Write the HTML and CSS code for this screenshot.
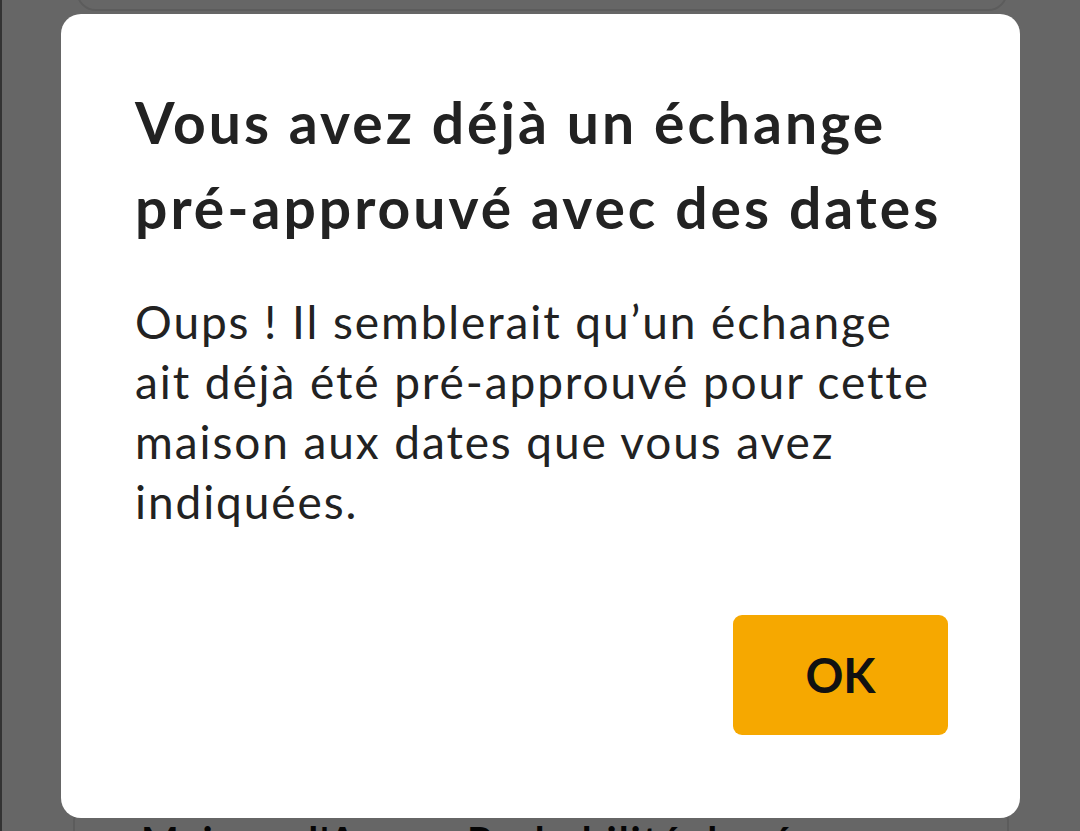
FILE: index.html
```html
<!DOCTYPE html>
<html lang="fr">
<head>
<meta charset="utf-8">
<title>Échange pré-approuvé</title>
<link rel="stylesheet" href="styles.css">
</head>
<body>
<div class="page">
  <div class="card card-top"></div>
  <div class="spacer"></div>
  <div class="card card-bottom">
    <p class="card-title">Maison d'Anne · Probabilité de réponse</p>
  </div>
</div>
<div class="overlay">
  <div class="modal" role="dialog" aria-modal="true">
    <h1 class="modal-title">Vous avez déjà un échange <span class="nw">pré-approuvé</span> avec des dates</h1>
    <p class="modal-text">Oups ! Il semblerait qu’un échange ait déjà été pré&#8209;approuvé pour cette maison aux dates que vous avez indiquées.</p>
    <div class="modal-actions">
      <button class="btn-ok" type="button">OK</button>
    </div>
  </div>
</div>
</body>
</html>
```

FILE: styles.css
```css
* { box-sizing: border-box; }
html, body { margin: 0; padding: 0; }
body {
  width: 1080px;
  height: 831px;
  overflow: hidden;
  background: #ffffff;
  font-family: "Lato", "Noto Sans", sans-serif;
  color: #222222;
}
.page {
  height: 831px;
  overflow: hidden;
  border-left: 2px solid #808080;
  display: flex;
  flex-direction: column;
}
.card {
  background: #ffffff;
  border: 2px solid #e6e6e6;
  border-radius: 20px;
}
.card-top {
  margin: -40px 0 0 74px;
  width: 932px;
  height: 51px;
  flex: none;
}
.spacer { height: 790px; flex: none; }
.card-bottom {
  margin-left: 71px;
  width: 936px;
  height: 200px;
  flex: none;
  padding: 14px 0 0 66px;
}
.card-title {
  margin: 0;
  font-weight: 700;
  font-size: 40px;
  line-height: 48px;
  letter-spacing: 2px;
  color: #111111;
  white-space: nowrap;
}
.overlay {
  position: fixed;
  inset: 0;
  background: rgba(0, 0, 0, 0.6);
  padding: 14px 60px 13px 61px;
  display: flex;
}
.modal {
  flex: 1;
  background: #ffffff;
  border-radius: 20px;
  padding: 66px 72px 83px 74px;
  display: flex;
  flex-direction: column;
}
.nw { white-space: nowrap; }
.modal-title {
  margin: 0;
  font-weight: 700;
  font-size: 57px;
  line-height: 85px;
  letter-spacing: 3px;
  color: #222222;
}
.modal-text {
  margin: 42px 0 0;
  font-weight: 400;
  font-size: 46px;
  line-height: 60px;
  letter-spacing: 1.9px;
  color: #222222;
}
.modal-actions {
  margin-top: auto;
  display: flex;
  justify-content: flex-end;
}
.btn-ok {
  width: 215px;
  height: 120px;
  border: none;
  border-radius: 9px;
  background: #f6a800;
  color: #111111;
  font-family: "Lato", "Noto Sans", sans-serif;
  font-weight: 700;
  font-size: 47px;
  padding: 0;
}
```
